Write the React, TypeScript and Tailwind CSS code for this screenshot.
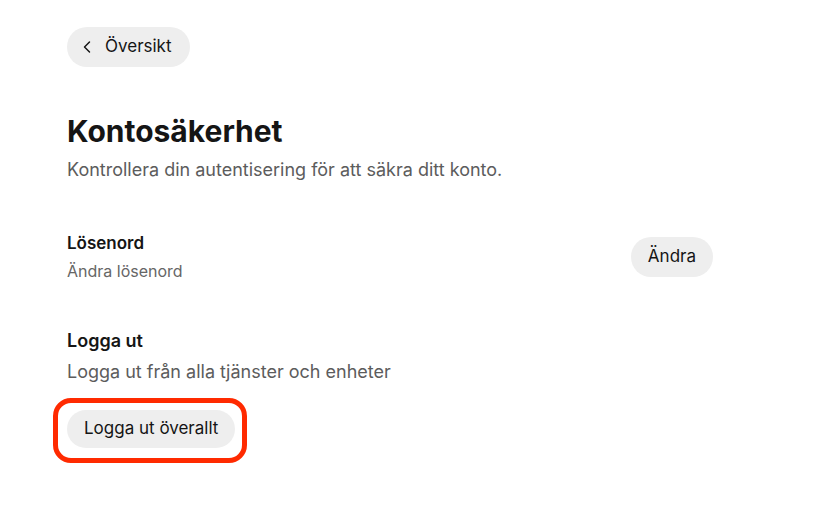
import React from 'react';
import { ChevronLeft } from 'lucide-react';

export default function App(): React.ReactElement {
  return (
    <div className="min-h-screen bg-white font-['Inter',sans-serif] text-[#151515]">
      <div className="ml-[67px] w-[646px] pt-[27px] flex flex-col items-start">
        {/* Back */}
        <button className="h-10 pl-[10px] pr-[18px] rounded-full bg-[#eeeeee] flex items-center gap-2 text-[17px] text-[#151515]">
          <ChevronLeft className="w-5 h-5" strokeWidth={1.75} />
          Översikt
        </button>

        {/* Header */}
        <h1 className="mt-[46px] text-[30px] leading-9 font-bold">Kontosäkerhet</h1>
        <p className="mt-[7px] text-lg leading-7 text-[#5c5c5c]">
          Kontrollera din autentisering för att säkra ditt konto.
        </p>

        {/* Password */}
        <div className="mt-[47px] w-full flex items-center justify-between">
          <div>
            <p className="text-[17px] leading-6 font-semibold">Lösenord</p>
            <p className="mt-1 text-base leading-6 text-[#666666]">Ändra lösenord</p>
          </div>
          <button className="h-10 px-[17px] rounded-full bg-[#eeeeee] text-[17px]">Ändra</button>
        </div>

        {/* Logout */}
        <p className="mt-11 text-lg leading-7 font-semibold">Logga ut</p>
        <p className="mt-[3px] text-lg leading-7 text-[#5c5c5c]">Logga ut från alla tjänster och enheter</p>
        <div className="mt-3 -ml-[14px] border-[5px] border-[#ff2a00] rounded-[18px] pl-[9px] pr-[7px] pt-[7px] pb-[10px]">
          <button className="h-[38px] px-[17px] rounded-full bg-[#eeeeee] text-[17px]">Logga ut överallt</button>
        </div>
      </div>
    </div>
  );
}
